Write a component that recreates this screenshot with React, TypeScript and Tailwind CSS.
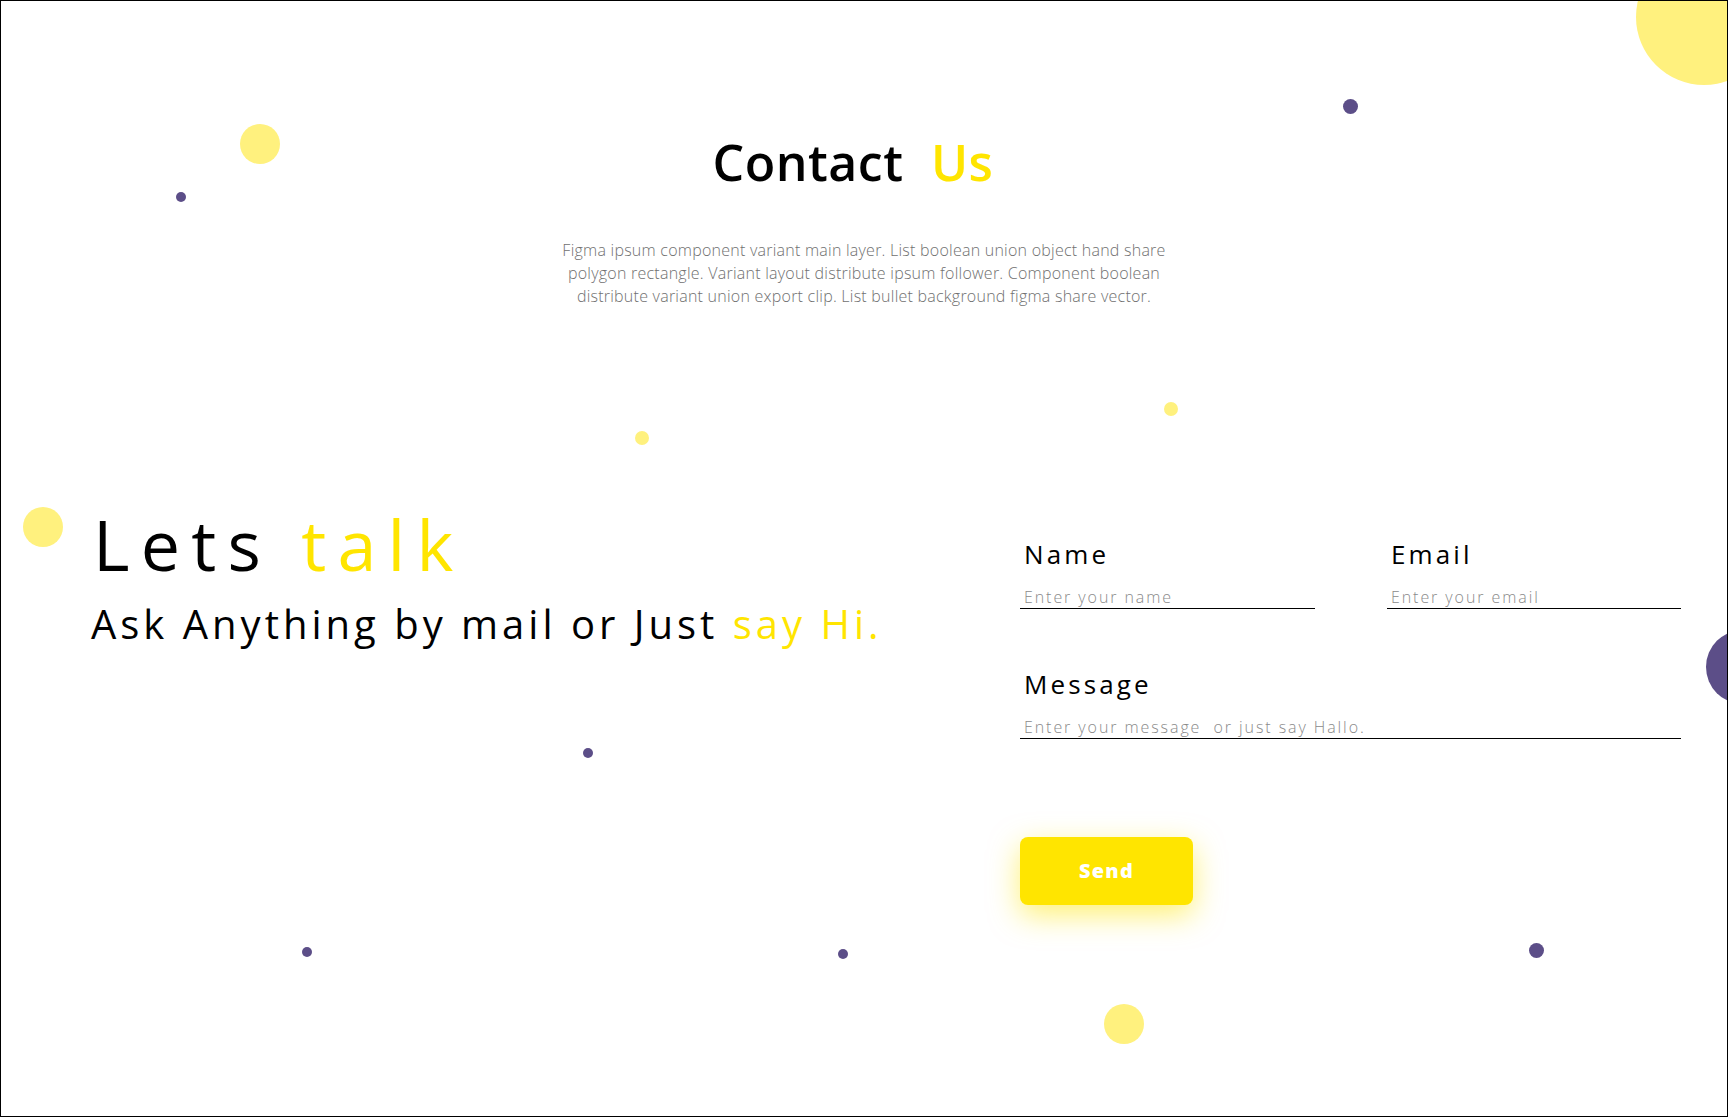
const DOTS = [
  { cls: "left-[1635px] top-[-52px] h-[136px] w-[136px] bg-[#fff17e]" },
  { cls: "left-[1342px] top-[98px] h-[15px] w-[15px] bg-[#5c4e88]" },
  { cls: "left-[239px] top-[123px] h-[40px] w-[40px] bg-[#fff17e]" },
  { cls: "left-[175px] top-[191px] h-[10px] w-[10px] bg-[#5c4e88]" },
  { cls: "left-[634px] top-[430px] h-[14px] w-[14px] bg-[#fff17e]" },
  { cls: "left-[1163px] top-[401px] h-[14px] w-[14px] bg-[#fff17e]" },
  { cls: "left-[22px] top-[506px] h-[40px] w-[40px] bg-[#fff17e]" },
  { cls: "left-[1705px] top-[629px] h-[74px] w-[74px] bg-[#5c4e88]" },
  { cls: "left-[582px] top-[747px] h-[10px] w-[10px] bg-[#5c4e88]" },
  { cls: "left-[301px] top-[946px] h-[10px] w-[10px] bg-[#5c4e88]" },
  { cls: "left-[837px] top-[948px] h-[10px] w-[10px] bg-[#5c4e88]" },
  { cls: "left-[1528px] top-[942px] h-[15px] w-[15px] bg-[#5c4e88]" },
  { cls: "left-[1103px] top-[1003px] h-[40px] w-[40px] bg-[#fff17e]" },
];

function Field({ label, placeholder, className = "" }: { label: string; placeholder: string; className?: string }) {
  return (
    <label className={"flex flex-col " + className}>
      <span className="pl-[4px] text-[26px] font-medium leading-none tracking-[0.12em] text-black">{label}</span>
      <input
        placeholder={placeholder}
        className="mt-[19px] border-b-[1.5px] border-black bg-transparent px-[4px] pb-0 text-[16px] leading-none tracking-[0.12em] text-black outline-none placeholder:font-light placeholder:text-[#8a8a8a]"
      />
    </label>
  );
}

export default function App() {
  return (
    <div className="relative h-[1117px] w-full overflow-hidden border border-black bg-white font-['Open_Sans',sans-serif]">
      {/* decorative bubbles */}
      {DOTS.map((d, i) => (
        <span key={i} className={"absolute rounded-full " + d.cls} />
      ))}

      <header className="relative flex flex-col items-center pt-[136px]">
        <h1 className="pr-[22px] text-[50px] font-semibold leading-none tracking-[0.01em] text-black">
          Contact <span className="ml-[14px] text-[#ffe500]">Us</span>
        </h1>
        <p className="mt-[52px] w-[625px] text-center text-[16px] font-light leading-[23px] tracking-[0.015em] text-[#707070]">
          Figma ipsum component variant main layer. List boolean union object hand share polygon rectangle. Variant layout distribute ipsum follower. Component boolean distribute variant union export clip. List bullet background figma share vector.
        </p>
      </header>

      <section className="relative mt-[201px] flex">
        <div className="w-[1019px] pl-[90px]">
          <h2 className="pl-[2px] text-[70px] font-normal leading-none tracking-[0.16em] text-black">
            Lets <span className="text-[#ffe500]">talk</span>
          </h2>
          <p className="mt-[25px] text-[40px] font-normal leading-none tracking-[0.1em] text-black">
            Ask Anything by mail or Just <span className="text-[#ffe500]">say Hi.</span>
          </p>
        </div>

        <form className="flex w-[661px] flex-col pt-[32px]" onSubmit={(e) => e.preventDefault()}>
          <div className="flex gap-[72px]">
            <Field label="Name" placeholder="Enter your name" className="w-[295px]" />
            <Field label="Email" placeholder="Enter your email" className="w-[294px]" />
          </div>
          <Field label="Message" placeholder="Enter your message  or just say Hallo." className="mt-[62px]" />
          <button
            type="submit"
            className="mt-[98px] h-[68px] w-[173px] rounded-[8px] bg-[#ffe500] text-[20px] font-extrabold tracking-[0.06em] text-white shadow-[0_10px_30px_rgba(255,229,0,0.55)]"
          >
            Send
          </button>
        </form>
      </section>
    </div>
  );
}
